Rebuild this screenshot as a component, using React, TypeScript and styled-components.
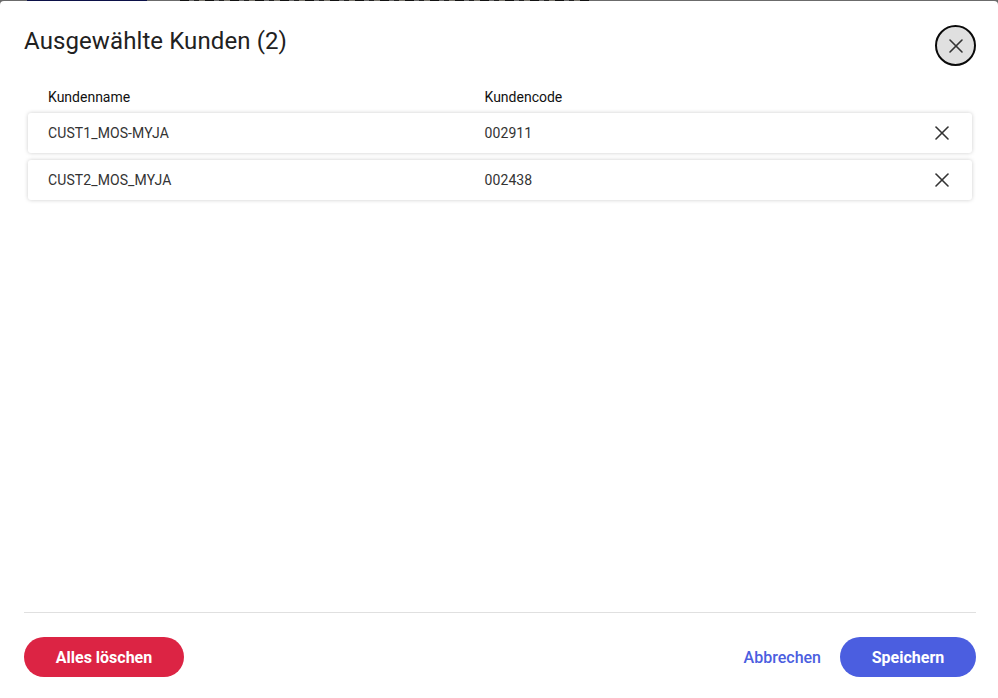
import React from "react";
import styled, { createGlobalStyle } from "styled-components";
import { X } from "lucide-react";

const customers = [
  { name: "CUST1_MOS-MYJA", code: "002911" },
  { name: "CUST2_MOS_MYJA", code: "002438" },
];

export default function App() {
  return (
    <>
      <GlobalStyle />
      <Page>
        <Backdrop>
          <BackdropGap $width={27} />
          <BackdropNav />
          <BackdropGap $width={33} />
          <BackdropText />
        </Backdrop>
        <Modal>
          <Header>
            <Title>Ausgewählte Kunden (2)</Title>
            <CloseButton aria-label="Schließen">
              <X size={24} strokeWidth={1.6} />
            </CloseButton>
          </Header>
          <Columns>
            <ColumnLabel>Kundenname</ColumnLabel>
            <ColumnLabel>Kundencode</ColumnLabel>
          </Columns>
          <List>
            {customers.map((c) => (
              <Row key={c.code}>
                <Cell>{c.name}</Cell>
                <Cell>{c.code}</Cell>
                <RemoveButton aria-label="Entfernen">
                  <X size={24} strokeWidth={1.6} />
                </RemoveButton>
              </Row>
            ))}
          </List>
          <Footer>
            <DangerButton>Alles löschen</DangerButton>
            <FooterRight>
              <TextButton>Abbrechen</TextButton>
              <PrimaryButton>Speichern</PrimaryButton>
            </FooterRight>
          </Footer>
        </Modal>
      </Page>
    </>
  );
}

const GlobalStyle = createGlobalStyle`
  html, body {
    margin: 0;
    padding: 0;
    height: 100%;
    overflow: hidden;
    background: #fff;
  }
  #root {
    height: 100%;
  }
  * {
    box-sizing: border-box;
  }
`;

const Page = styled.div`
  width: 998px;
  height: 698px;
  display: flex;
  flex-direction: column;
  background: #6b6b6b;
  font-family: Roboto, "Liberation Sans", sans-serif;
`;

const Backdrop = styled.div`
  height: 1px;
  flex: none;
  display: flex;
  background: #6b6b6b;
`;

const BackdropGap = styled.div<{ $width: number }>`
  width: ${(p) => p.$width}px;
`;

const BackdropNav = styled.div`
  width: 120px;
  background: #0b1048;
`;

const BackdropText = styled.div`
  width: 412px;
  background: repeating-linear-gradient(
    90deg,
    #111 0 9px,
    #6b6b6b 9px 14px,
    #222 14px 19px,
    #77746c 19px 25px
  );
`;

const Modal = styled.div`
  flex: 1;
  display: flex;
  flex-direction: column;
  background: #fff;
  border-radius: 4px 4px 0 0;
  padding: 24px 22px 21px 24px;
`;

const Header = styled.div`
  display: flex;
  justify-content: space-between;
  align-items: flex-start;
  height: 60px;
`;

const Title = styled.h2`
  margin: 0;
  font-size: 24px;
  line-height: 32px;
  font-weight: 400;
  letter-spacing: 0.1px;
  color: #212121;
`;

const CloseButton = styled.button`
  width: 41px;
  height: 41px;
  padding: 0;
  display: flex;
  align-items: center;
  justify-content: center;
  border: 2px solid #0a0a0a;
  border-radius: 50%;
  background: #e0e0e0;
  color: #333;
`;

const Columns = styled.div`
  display: grid;
  grid-template-columns: 436.5px 1fr;
  align-items: start;
  padding: 0 24px;
  height: 28px;
`;

const ColumnLabel = styled.span`
  font-size: 14px;
  line-height: 24px;
  font-weight: 400;
  color: #111;
`;

const List = styled.div`
  display: flex;
  flex-direction: column;
  gap: 7px;
  padding: 0 4px;
  flex: 1;
`;

const Row = styled.div`
  display: grid;
  grid-template-columns: 436.5px 1fr 42px;
  align-items: center;
  height: 40px;
  padding-left: 20px;
  border-radius: 3px;
  background: #fff;
  box-shadow: 0 0 4px rgba(0, 0, 0, 0.2);
`;

const Cell = styled.span`
  font-size: 14px;
  letter-spacing: 0.1px;
  color: #333;
`;

const RemoveButton = styled.button`
  width: 24px;
  height: 24px;
  padding: 0;
  display: flex;
  align-items: center;
  justify-content: center;
  border: none;
  background: none;
  color: #333;
`;

const Footer = styled.div`
  display: flex;
  justify-content: space-between;
  align-items: center;
  border-top: 1px solid #e0e0e0;
  padding-top: 24px;
`;

const FooterRight = styled.div`
  display: flex;
  align-items: center;
  gap: 19px;
`;

const PillButton = styled.button`
  height: 40px;
  border: none;
  border-radius: 20px;
  font-family: inherit;
  font-size: 16px;
  font-weight: 700;
  color: #fff;
`;

const DangerButton = styled(PillButton)`
  width: 160px;
  background: #dc2444;
`;

const PrimaryButton = styled(PillButton)`
  width: 136px;
  background: #4b5ee0;
`;

const TextButton = styled.button`
  padding: 0;
  border: none;
  background: none;
  font-family: inherit;
  font-size: 16px;
  font-weight: 500;
  color: #4b5ee0;
`;
